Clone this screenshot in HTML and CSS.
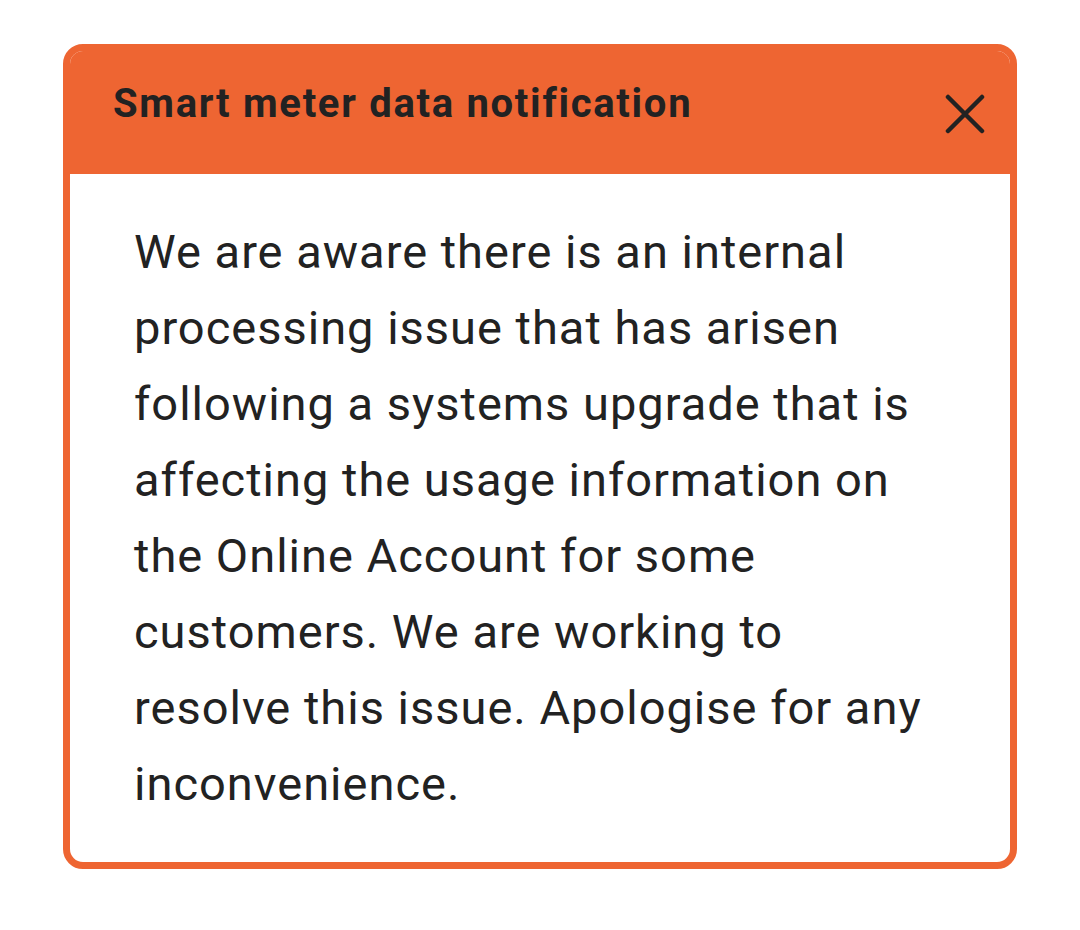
FILE: index.html
```html
<!DOCTYPE html>
<html lang="en">
<head>
<meta charset="utf-8">
<title>Smart meter data notification</title>
<link rel="stylesheet" href="styles.css">
</head>
<body>
<div class="card">
  <div class="card-header">
    <h2 class="card-title">Smart meter data notification</h2>
    <button class="close" aria-label="Close">
      <svg width="40" height="40" viewBox="0 0 40 40"><path d="M3 3 L37 37 M37 3 L3 37" stroke="#222222" stroke-width="4.5" stroke-linecap="round" fill="none"/></svg>
    </button>
  </div>
  <div class="card-body">
    <p class="message">We are aware there is an internal processing issue that has arisen following a systems upgrade that is affecting the usage information on the Online Account for some customers. We are working to resolve this issue. Apologise for any inconvenience.</p>
  </div>
</div>
</body>
</html>
```
FILE: styles.css
```css
html, body {
  margin: 0;
  padding: 0;
  background: #ffffff;
}
body {
  font-family: Roboto, "Liberation Sans", sans-serif;
  color: #222222;
}
.card {
  margin: 44px 0 0 63px;
  width: 954px;
  box-sizing: border-box;
  border: 7px solid #EE6532;
  border-radius: 20px;
  overflow: hidden;
  background: #ffffff;
}
.card-header {
  background: #EE6532;
  height: 123px;
  box-sizing: border-box;
  display: flex;
  justify-content: space-between;
  align-items: flex-start;
  padding: 29px 25px 0 43px;
}
.card-title {
  margin: 0;
  font-size: 40px;
  font-weight: 700;
  line-height: 48px;
  letter-spacing: 1.7px;
  color: #222222;
}
.close {
  border: 0;
  background: none;
  padding: 0;
  margin-top: 14px;
  width: 40px;
  height: 40px;
  cursor: pointer;
  display: block;
}
.close svg {
  display: block;
}
.card-body {
  padding: 40px 66px 40px 64px;
}
.message {
  margin: 0;
  font-size: 47px;
  line-height: 76px;
  letter-spacing: 1px;
  color: #222222;
}
```
